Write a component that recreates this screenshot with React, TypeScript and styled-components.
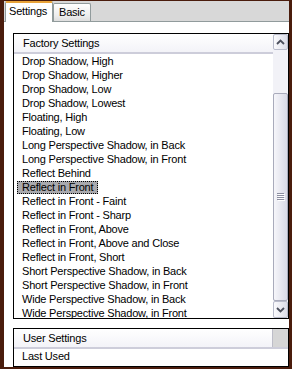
import React from 'react';
import styled, { createGlobalStyle } from 'styled-components';

const GlobalStyle = createGlobalStyle`
  html, body {
    margin: 0;
    padding: 0;
    background: #4a1c0c;
  }
  body {
    font-family: 'Liberation Sans', Arial, sans-serif;
    font-size: 11px;
    color: #000;
  }
`

const Frame = styled.div`
  width: 292px;
  height: 369px;
  box-sizing: border-box;
  padding: 1px 3px 2px 4px;
  background: #4a1c0c;
`

const Panel = styled.div`
  height: 366px;
  background: #fff;
  display: flex;
  flex-direction: column;
`

const TabStrip = styled.div`
  height: 20px;
  background: #d8d8d8;
  border-bottom: 1px solid #919b9c;
  display: flex;
  align-items: flex-end;
  padding-left: 1px;
`

const Tab = styled.div<{ $active?: boolean; $w: number }>`
  position: relative;
  box-sizing: border-box;
  width: ${p => p.$w}px;
  height: ${p => (p.$active ? 21 : 18)}px;
  margin-bottom: ${p => (p.$active ? -1 : 0)}px;
  border: 1px solid #919b9c;
  border-bottom: none;
  border-top: ${p => (p.$active ? '2px solid #e8a33a' : '1px solid #919b9c')};
  border-radius: 2px 2px 0 0;
  background: ${p => (p.$active ? '#fff' : 'linear-gradient(#ffffff, #ececec 70%, #dedede)')};
  padding-left: ${p => (p.$active ? 3 : 5)}px;
  line-height: ${p => (p.$active ? 16 : 16)}px;
  letter-spacing: -0.2px;
  z-index: ${p => (p.$active ? 1 : 0)};
`

const Content = styled.div`
  flex: 1;
  display: flex;
  flex-direction: column;
  padding: 11px 0 0 9px;
  gap: 9px;
`

const Box = styled.div<{ $h: number }>`
  height: ${p => p.$h}px;
  box-sizing: border-box;
  border: 1px solid #000;
  display: flex;
  overflow: hidden;
`

const Column = styled.div`
  flex: 1;
  display: flex;
  flex-direction: column;
  min-width: 0;
`

const Header = styled.div`
  height: 18px;
  flex: none;
  display: flex;
  background: linear-gradient(#ffffff, #f3f3f8);
  border-bottom: 2px solid #cdcdda;
`

const HeaderLabel = styled.div`
  flex: 1;
  padding-left: 9px;
  line-height: 18px;
  letter-spacing: -0.2px;
`

const HeaderFiller = styled.div`
  width: 15px;
  background: #d6d6d6;
  border-left: 1px solid #bdbdc8;
`

const Items = styled.div`
  flex: 1;
  overflow: hidden;
`

const Row = styled.div`
  height: 14px;
  padding-left: 3px;
  display: flex;
  align-items: center;
  white-space: nowrap;
`

const RowText = styled.span<{ $selected?: boolean }>`
  box-sizing: border-box;
  height: 13px;
  line-height: 11px;
  padding: 0 4px;
  letter-spacing: -0.2px;
  background: ${p => (p.$selected ? '#a9a9ad' : 'transparent')};
  border: 1px ${p => (p.$selected ? 'dotted #000' : 'solid transparent')};
`

const ScrollBar = styled.div`
  width: 15px;
  flex: none;
  display: flex;
  flex-direction: column;
  background: #f2f2f7;
`

const ScrollButton = styled.div<{ $h: number }>`
  height: ${p => p.$h}px;
  box-sizing: border-box;
  border: 1px solid #b9bccb;
  border-radius: 2px;
  background: linear-gradient(to right, #fbfbfd, #dcdde8);
  display: flex;
  align-items: center;
  justify-content: center;
`

const Track = styled.div<{ $h: number }>`
  height: ${p => p.$h}px;
  background: #f2f2f7;
`

const Thumb = styled.div`
  flex: 1;
  box-sizing: border-box;
  border: 1px solid #a9abbb;
  border-radius: 2px;
  background: linear-gradient(to right, #f6f6fa, #d9dae6);
  display: flex;
  align-items: center;
  justify-content: center;
`

const factory = [
  'Drop Shadow, High',
  'Drop Shadow, Higher',
  'Drop Shadow, Low',
  'Drop Shadow, Lowest',
  'Floating, High',
  'Floating, Low',
  'Long Perspective Shadow, in Back',
  'Long Perspective Shadow, in Front',
  'Reflect Behind',
  'Reflect in Front',
  'Reflect in Front - Faint',
  'Reflect in Front - Sharp',
  'Reflect in Front, Above',
  'Reflect in Front, Above and Close',
  'Reflect in Front, Short',
  'Short Perspective Shadow, in Back',
  'Short Perspective Shadow, in Front',
  'Wide Perspective Shadow, in Back',
  'Wide Perspective Shadow, in Front',
]

const Chevron = ({ up }: { up?: boolean }) => (
  <svg width="9" height="6" viewBox="0 0 9 6">
    <path
      d={up ? 'M1 5 L4.5 1.5 L8 5' : 'M1 1 L4.5 4.5 L8 1'}
      fill="none"
      stroke="#4b4f5c"
      strokeWidth="1.8"
    />
  </svg>
)

const Grip = () => (
  <svg width="8" height="8" viewBox="0 0 8 8">
    {[0, 2, 4, 6].map(y => (
      <g key={y}>
        <rect x="0" y={y} width="7" height="1" fill="#8c8ea0" />
        <rect x="1" y={y + 1} width="7" height="1" fill="#ffffff" />
      </g>
    ))}
  </svg>
)

const App = () => {
  const selected = 'Reflect in Front'

  return (
    <Frame>
      <GlobalStyle />
      <Panel>
        <TabStrip>
          <Tab $active $w={48}>Settings</Tab>
          <Tab $w={38}>Basic</Tab>
        </TabStrip>
        <Content>
          <Box $h={286}>
            <Column>
              <Header>
                <HeaderLabel>Factory Settings</HeaderLabel>
              </Header>
              <Items>
                {factory.map(name => (
                  <Row key={name}>
                    <RowText $selected={name === selected}>{name}</RowText>
                  </Row>
                ))}
              </Items>
            </Column>
            <ScrollBar>
              <ScrollButton $h={16}><Chevron up /></ScrollButton>
              <Track $h={43} />
              <Thumb><Grip /></Thumb>
              <ScrollButton $h={17}><Chevron /></ScrollButton>
            </ScrollBar>
          </Box>
          <Box $h={39}>
            <Column>
              <Header>
                <HeaderLabel>User Settings</HeaderLabel>
                <HeaderFiller />
              </Header>
              <Items>
                <Row><RowText>Last Used</RowText></Row>
              </Items>
            </Column>
          </Box>
        </Content>
      </Panel>
    </Frame>
  )
}

export default App
